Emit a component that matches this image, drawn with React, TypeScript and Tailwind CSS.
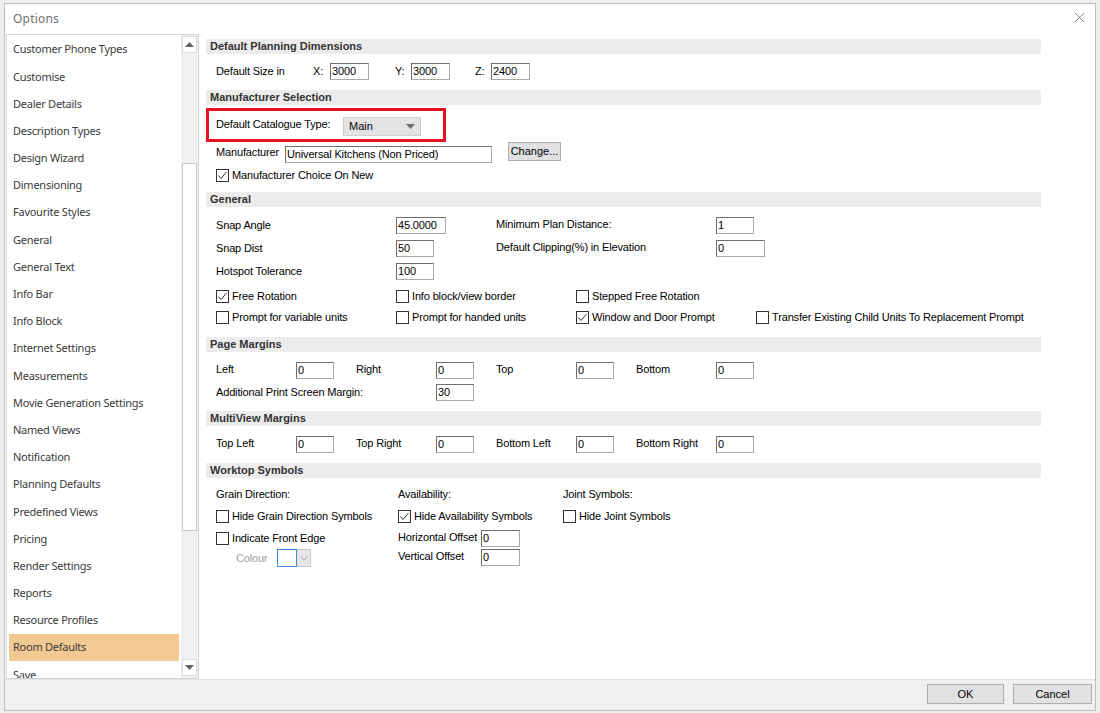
import React from "react";
import { X } from "lucide-react";

const items = [
  "Customer Phone Types",
  "Customise",
  "Dealer Details",
  "Description Types",
  "Design Wizard",
  "Dimensioning",
  "Favourite Styles",
  "General",
  "General Text",
  "Info Bar",
  "Info Block",
  "Internet Settings",
  "Measurements",
  "Movie Generation Settings",
  "Named Views",
  "Notification",
  "Planning Defaults",
  "Predefined Views",
  "Pricing",
  "Render Settings",
  "Reports",
  "Resource Profiles",
  "Room Defaults",
  "Save",
];

function Input({ cls, value }: { cls: string; value: string }) {
  return (
    <div
      className={`h-[17px] shrink-0 bg-white border border-t-[#6e6e6e] border-l-[#6e6e6e] border-r-[#a9a9a9] border-b-[#a9a9a9] pl-[1px] text-[11px] leading-[15px] tracking-[-0.15px] text-black whitespace-nowrap overflow-hidden ${cls}`}
    >
      {value}
    </div>
  );
}

function Check({ checked, label, cls = "" }: { checked?: boolean; label: string; cls?: string }) {
  return (
    <div className={`flex items-center shrink-0 ${cls}`}>
      <div className="w-[13px] h-[13px] border border-[#333333] bg-white flex items-center justify-center shrink-0">
        {checked && (
          <svg width="11" height="11" viewBox="0 0 11 11">
            <polyline points="1.5,5.5 4,8.5 9.5,2" fill="none" stroke="#333" strokeWidth="1" />
          </svg>
        )}
      </div>
      <span className="ml-[3px] text-[11px] leading-[13px] tracking-[-0.15px] text-black whitespace-nowrap">{label}</span>
    </div>
  );
}

function Header({ title }: { title: string }) {
  return (
    <div className="w-[835px] h-[15px] bg-[#ececec] pl-[4px] text-[11px] leading-[15px] font-bold text-[#333333]">
      {title}
    </div>
  );
}

function Label({ cls, children, grey }: { cls: string; children: React.ReactNode; grey?: boolean }) {
  return (
    <div
      className={`shrink-0 text-[11px] leading-[13px] tracking-[-0.15px] whitespace-nowrap ${grey ? "text-[#a0a0a0]" : "text-black"} ${cls}`}
    >
      {children}
    </div>
  );
}

function Button({ cls, children }: { cls: string; children: React.ReactNode }) {
  return (
    <div
      className={`shrink-0 bg-[#e1e1e1] border border-[#adadad] flex items-center justify-center text-[11px] text-black ${cls}`}
    >
      {children}
    </div>
  );
}

export default function App() {
  return (
    <div className="w-[1100px] h-[713px] bg-[#eeeeee] overflow-hidden font-['Liberation_Sans',Arial,sans-serif]">
      <div className="ml-[4px] mt-[3px] w-[1092px] h-[708px] bg-white border border-[#bdbdbd] flex flex-col">
        {/* Title bar */}
        <div className="h-[30px] flex items-center justify-between shrink-0">
          <span className="pl-[8px] text-[12px] text-[#707070] font-['Noto_Sans',sans-serif] tracking-[0.2px]">Options</span>
          <X className="mr-[7px] mt-[-4px] text-[#555555]" size={17} strokeWidth={1} />
        </div>

        {/* Body */}
        <div className="flex h-[645px] shrink-0">
          {/* Left list */}
          <div className="ml-[1px] w-[193px] h-[645px] border border-[#d6d6d6] flex">
            <div className="w-[174px] h-full overflow-hidden pl-[2px] pt-[1px] font-['Noto_Sans',sans-serif]">
              {items.map((it) => (
                <div
                  key={it}
                  className={`h-[27.2px] w-[170px] flex items-center pl-[4px] text-[11px] tracking-[-0.25px] text-[#3a3a3a] whitespace-nowrap ${
                    it === "Room Defaults" ? "bg-[#f3c993]" : ""
                  }`}
                >
                  {it}
                </div>
              ))}
            </div>
            <div className="w-[17px] h-full bg-[#f0f0f0] flex flex-col">
              <div className="h-[17px] mt-[1px] mx-[1px] bg-white border border-[#dcdcdc] flex items-center justify-center">
                <svg width="9" height="5" viewBox="0 0 9 5">
                  <polygon points="0,5 9,5 4.5,0" fill="#606060" />
                </svg>
              </div>
              <div className="h-[110px]" />
              <div className="h-[368px] mx-[1px] bg-white border border-[#c8c8c8]" />
              <div className="flex-1" />
              <div className="h-[17px] mb-[2px] mx-[1px] bg-white border border-[#dcdcdc] flex items-center justify-center">
                <svg width="9" height="5" viewBox="0 0 9 5">
                  <polygon points="0,0 9,0 4.5,5" fill="#606060" />
                </svg>
              </div>
            </div>
          </div>

          {/* Right panel */}
          <div className="flex-1 pl-[7px] pt-[5px] flex flex-col">
            <Header title="Default Planning Dimensions" />
            <div className="h-[36px] pl-[10px]">
              <div className="mt-[9px] flex items-center h-[17px]">
                <Label cls="w-[97px]">Default Size in</Label>
                <Label cls="w-[17px]">X:</Label>
                <Input cls="w-[39px]" value="3000" />
                <div className="w-[26px]" />
                <Label cls="w-[16px]">Y:</Label>
                <Input cls="w-[39px]" value="3000" />
                <div className="w-[25px]" />
                <Label cls="w-[16px]">Z:</Label>
                <Input cls="w-[39px]" value="2400" />
              </div>
            </div>

            <Header title="Manufacturer Selection" />
            <div className="h-[87px]">
              <div className="mt-[3px] w-[240px] h-[34px] border-[3px] border-[#e81123] flex items-center pl-[7px]">
                <Label cls="w-[127px] mb-[2px]">Default Catalogue Type:</Label>
                <div className="w-[78px] h-[19px] mt-[2px] bg-[#e3e3e3] border border-[#d0d0d0] flex items-center justify-between pl-[5px] pr-[5px]">
                  <span className="text-[11px] text-black">Main</span>
                  <svg width="9" height="5" viewBox="0 0 9 5">
                    <polygon points="0,0 9,0 4.5,5" fill="#707070" />
                  </svg>
                </div>
              </div>
              <div className="pl-[10px] flex items-start h-[20px]">
                <Label cls="w-[69px] mt-[4px]">Manufacturer</Label>
                <Input cls="w-[207px] mt-[4px]" value="Universal Kitchens (Non Priced)" />
                <div className="w-[16px]" />
                <Button cls="w-[53px] h-[19px]">Change...</Button>
              </div>
              <div className="pl-[10px] mt-[7px]">
                <Check checked label="Manufacturer Choice On New" />
              </div>
            </div>

            <Header title="General" />
            <div className="h-[130px] pl-[10px]">
              <div className="mt-[10px] flex items-center h-[17px]">
                <Label cls="w-[180px] mb-[1px]">Snap Angle</Label>
                <Input cls="w-[50px]" value="45.0000" />
                <div className="w-[50px]" />
                <Label cls="w-[220px] mb-[2px]">Minimum Plan Distance:</Label>
                <Input cls="w-[38px]" value="1" />
              </div>
              <div className="mt-[6px] flex items-center h-[17px]">
                <Label cls="w-[180px] mb-[1px]">Snap Dist</Label>
                <Input cls="w-[38px]" value="50" />
                <div className="w-[62px]" />
                <Label cls="w-[220px] mb-[3px]">Default Clipping(%) in Elevation</Label>
                <Input cls="w-[49px]" value="0" />
              </div>
              <div className="mt-[6px] flex items-center h-[17px]">
                <Label cls="w-[180px] mb-[1px]">Hotspot Tolerance</Label>
                <Input cls="w-[38px]" value="100" />
              </div>
              <div className="mt-[10px] flex items-center h-[13px]">
                <Check checked label="Free Rotation" cls="w-[180px]" />
                <Check label="Info block/view border" cls="w-[180px]" />
                <Check label="Stepped Free Rotation" cls="w-[180px]" />
              </div>
              <div className="mt-[8px] flex items-center h-[13px]">
                <Check label="Prompt for variable units" cls="w-[180px]" />
                <Check label="Prompt for handed units" cls="w-[180px]" />
                <Check checked label="Window and Door Prompt" cls="w-[180px]" />
                <Check label="Transfer Existing Child Units To Replacement Prompt" />
              </div>
            </div>

            <Header title="Page Margins" />
            <div className="h-[59px] pl-[10px]">
              <div className="mt-[10px] flex items-center h-[17px]">
                <Label cls="w-[80px] mb-[3px]">Left</Label>
                <Input cls="w-[38px]" value="0" />
                <div className="w-[22px]" />
                <Label cls="w-[80px] mb-[3px]">Right</Label>
                <Input cls="w-[38px]" value="0" />
                <div className="w-[22px]" />
                <Label cls="w-[80px] mb-[3px]">Top</Label>
                <Input cls="w-[38px]" value="0" />
                <div className="w-[22px]" />
                <Label cls="w-[80px] mb-[3px]">Bottom</Label>
                <Input cls="w-[38px]" value="0" />
              </div>
              <div className="mt-[5px] flex items-center h-[17px]">
                <Label cls="w-[220px] mb-[1px]">Additional Print Screen Margin:</Label>
                <Input cls="w-[38px]" value="30" />
              </div>
            </div>

            <Header title="MultiView Margins" />
            <div className="h-[37px] pl-[10px]">
              <div className="mt-[10px] flex items-center h-[17px]">
                <Label cls="w-[80px] mb-[2px]">Top Left</Label>
                <Input cls="w-[38px]" value="0" />
                <div className="w-[22px]" />
                <Label cls="w-[80px] mb-[2px]">Top Right</Label>
                <Input cls="w-[38px]" value="0" />
                <div className="w-[22px]" />
                <Label cls="w-[80px] mb-[2px]">Bottom Left</Label>
                <Input cls="w-[38px]" value="0" />
                <div className="w-[22px]" />
                <Label cls="w-[80px] mb-[2px]">Bottom Right</Label>
                <Input cls="w-[38px]" value="0" />
              </div>
            </div>

            <Header title="Worktop Symbols" />
            <div className="pl-[10px]">
              <div className="mt-[10px] flex items-center h-[13px]">
                <Label cls="w-[182px]">Grain Direction:</Label>
                <Label cls="w-[165px]">Availability:</Label>
                <Label cls="w-[120px]">Joint Symbols:</Label>
              </div>
              <div className="mt-[9px] flex items-center h-[13px]">
                <Check label="Hide Grain Direction Symbols" cls="w-[182px]" />
                <Check checked label="Hide Availability Symbols" cls="w-[165px]" />
                <Check label="Hide Joint Symbols" />
              </div>
              <div className="mt-[7px] flex items-center h-[17px]">
                <Check label="Indicate Front Edge" cls="w-[182px]" />
                <Label cls="w-[83px] mb-[3px]">Horizontal Offset</Label>
                <Input cls="w-[39px]" value="0" />
              </div>
              <div className="mt-[2px] flex items-start h-[18px]">
                <div className="w-[182px] flex items-center pl-[20px] h-[18px]">
                  <Label grey cls="w-[41px]">Colour</Label>
                  <div className="flex h-[18px]">
                    <div className="w-[20px] h-[18px] bg-white border border-[#3d8ee0]" />
                    <div className="w-[14px] h-[18px] bg-[#e6e6e6] border border-[#cccccc] border-l-0 flex items-center justify-center">
                      <svg width="8" height="5" viewBox="0 0 8 5">
                        <polyline points="0.5,0.5 4,4 7.5,0.5" fill="none" stroke="#a8a8a8" strokeWidth="1" />
                      </svg>
                    </div>
                  </div>
                </div>
                <Label cls="w-[83px] mt-[1px]">Vertical Offset</Label>
                <Input cls="w-[39px]" value="0" />
              </div>
            </div>
          </div>
        </div>

        {/* Footer */}
        <div className="flex-1 bg-[#f0f0f0] border-t border-[#e2e2e2] flex justify-end items-start pt-[4px] pr-[3px] gap-[9px]">
          <Button cls="w-[77px] h-[20px]">OK</Button>
          <Button cls="w-[79px] h-[20px]">Cancel</Button>
        </div>
      </div>
    </div>
  );
}
